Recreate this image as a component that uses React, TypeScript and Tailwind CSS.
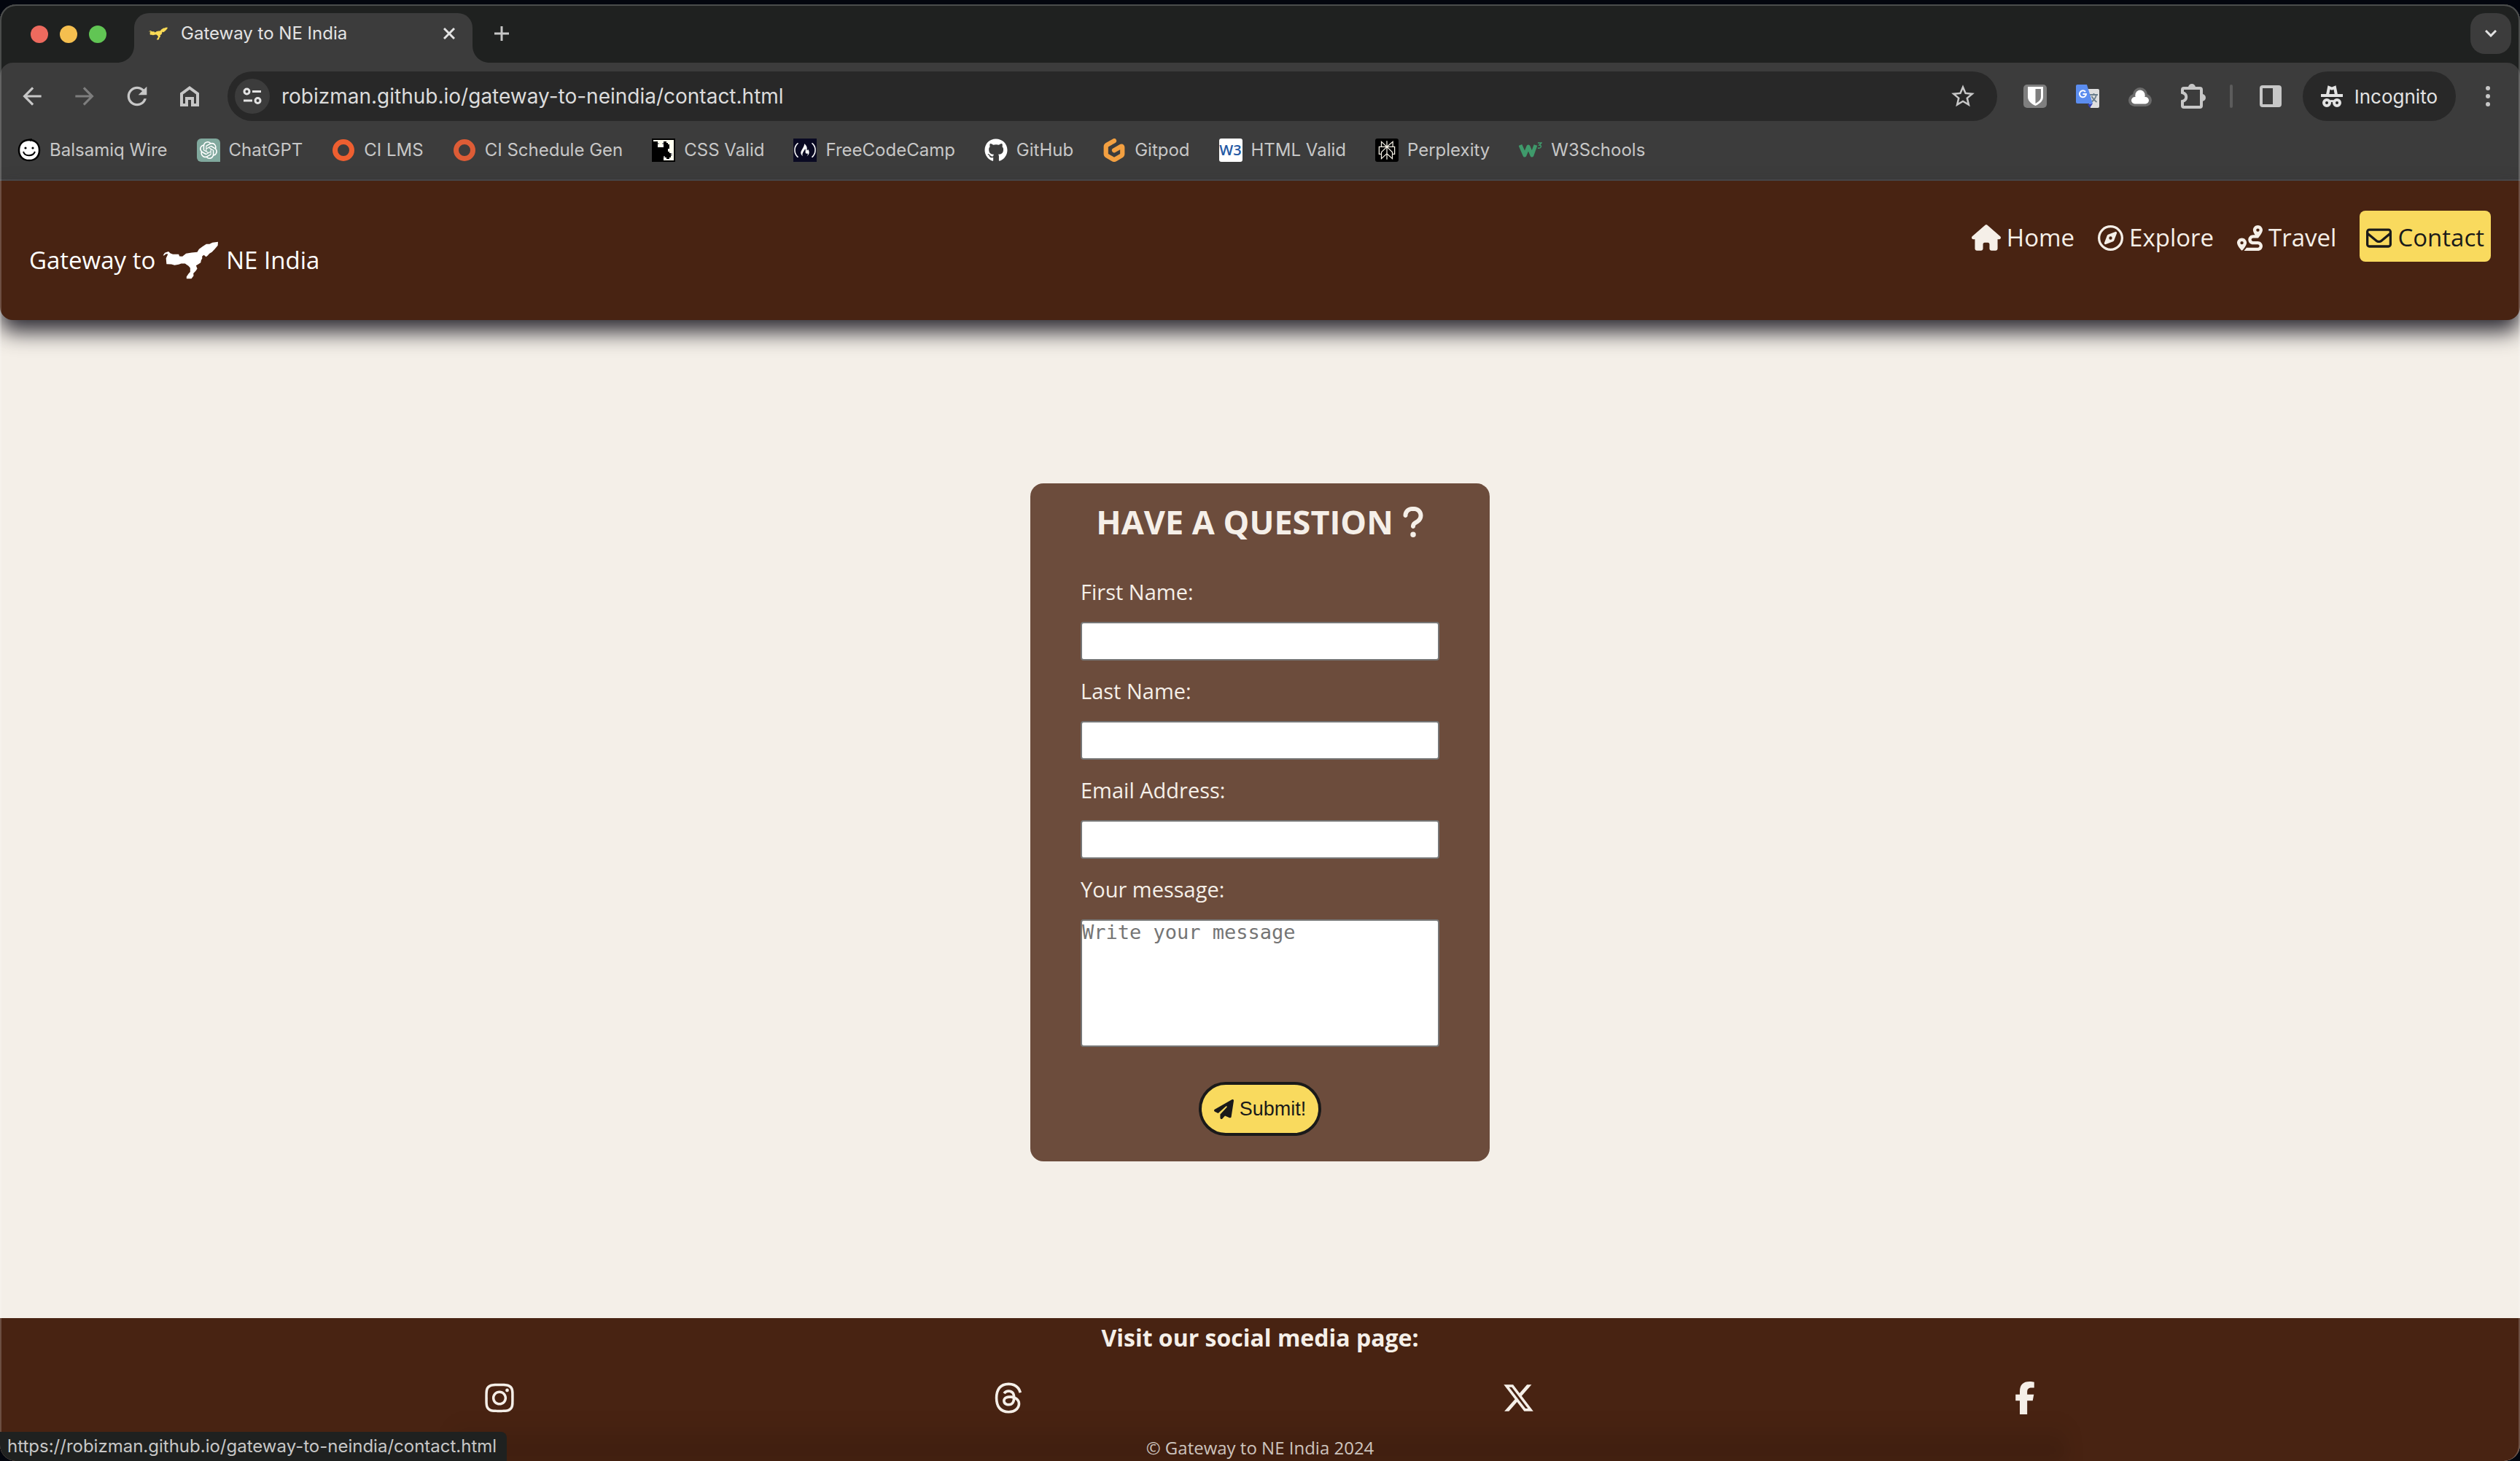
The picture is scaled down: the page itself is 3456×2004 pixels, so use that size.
import React from "react";
import {
  FaHouse,
  FaRegCompass,
  FaRoute,
  FaRegEnvelope,
  FaPaperPlane,
  FaQuestion,
  FaInstagram,
  FaThreads,
  FaXTwitter,
  FaFacebookF,
  FaFreeCodeCamp,
  FaGithub,
} from "react-icons/fa6";
import { MdArrowBack, MdArrowForward, MdRefresh, MdStarBorder } from "react-icons/md";
import { SiOpenai, SiGitpod, SiPerplexity } from "react-icons/si";

const MAP_PATH =
  "M678 338 685 328 700 323 708 330 718 334 742 334 745 342 757 343 772 331 795 327 818 325 825 313 838 303 855 292 868 292 880 286 903 283 902 298 890 312 878 325 868 331 860 340 854 344 845 337 838 342 838 352 834 358 832 368 822 375 813 380 818 393 812 402 802 412 803 422 794 434 774 434 774 426 782 414 789 406 789 390 782 382 768 372 752 372 742 376 725 379 712 375 692 374 690 350 698 333 690 332 682 339Z";

function RegionMap({ className }: { className: string }) {
  return (
    <svg viewBox="676 281 230 155" className={className} fill="currentColor" aria-hidden="true">
      <path d={MAP_PATH} />
    </svg>
  );
}

function TabStrip() {
  return (
    <div className="flex h-20 items-end bg-[#1f2120] pr-3 pl-[42px]">
      <div className="mb-[27px] flex gap-4">
        <button aria-label="Close window" className="size-6 rounded-full bg-[#ed6a5e]" />
        <button aria-label="Minimise window" className="size-6 rounded-full bg-[#f5bf4f]" />
        <button aria-label="Zoom window" className="size-6 rounded-full bg-[#61c554]" />
      </div>
      <div className="relative ml-[38px] flex h-[68px] w-[464px] items-center rounded-t-[20px] bg-[#3c3c3c] pr-6 pb-3 pl-5">
        <svg viewBox="0 0 24 24" className="absolute bottom-0 -left-6 size-6" fill="#3c3c3c" aria-hidden="true">
          <path d="M24 0v24H0C14 24 24 14 24 0Z" />
        </svg>
        <svg viewBox="0 0 24 24" className="absolute -right-6 bottom-0 size-6" fill="#3c3c3c" aria-hidden="true">
          <path d="M0 0v24h24C10 24 0 14 0 0Z" />
        </svg>
        <RegionMap className="h-[18px] w-[26px] text-[#f9da55]" />
        <span className="ml-[18px] flex-1 text-[24px] text-[#e3e3e3]">Gateway to NE India</span>
        <button aria-label="Close tab">
          <svg viewBox="0 0 16 16" className="size-4" stroke="#e3e3e3" strokeWidth="3" aria-hidden="true">
            <path d="M1 1l14 14M15 1L1 15" />
          </svg>
        </button>
      </div>
      <button aria-label="New tab" className="mb-[30px] ml-[30px]">
        <svg viewBox="0 0 20 20" className="size-5" stroke="#c7c7c7" strokeWidth="3" aria-hidden="true">
          <path d="M10 0v20M0 10h20" />
        </svg>
      </button>
      <button
        aria-label="Search tabs"
        className="mb-3 ml-auto flex size-14 items-center justify-center rounded-[20px] bg-[#3c3c3c]"
      >
        <svg viewBox="0 0 16 10" className="h-[10px] w-4" fill="none" stroke="#e3e3e3" strokeWidth="3" aria-hidden="true">
          <path d="M1 1l7 7 7-7" />
        </svg>
      </button>
    </div>
  );
}

function NavButton({ label, children }: { label: string; children: React.ReactNode }) {
  return (
    <button aria-label={label} className="flex size-10 items-center justify-center">
      {children}
    </button>
  );
}

function Toolbar() {
  return (
    <div className="flex items-center pt-3 pr-10 pl-6 text-[#c7c7c7]">
      <div className="mr-8 flex gap-8">
        <NavButton label="Back">
          <MdArrowBack className="size-[38px] shrink-0" />
        </NavButton>
        <NavButton label="Forward">
          <MdArrowForward className="size-[38px] shrink-0 text-[#7d7d7d]" />
        </NavButton>
        <NavButton label="Reload">
          <MdRefresh className="size-10 shrink-0" />
        </NavButton>
        <NavButton label="Home page">
          <svg viewBox="0 0 26 28" className="h-7 w-[26px]" fill="none" stroke="currentColor" strokeWidth="4" aria-hidden="true">
            <path d="M2 10.500 13 2.500l11 8V26h-7v-9H9v9H2Z" />
          </svg>
        </NavButton>
      </div>

      <div className="flex h-[68px] flex-1 items-center rounded-full bg-[#282828] pr-[28px] pl-[10px]">
        <button aria-label="Site information" className="flex size-12 items-center justify-center rounded-full bg-[#3c3c3c]">
          <svg viewBox="0 0 26 24" className="h-6 w-[26px]" fill="none" stroke="#e3e3e3" strokeWidth="3" aria-hidden="true">
            <circle cx="5.500" cy="5.500" r="3.500" />
            <path d="M13 5.500h12M1 18h12" />
            <circle cx="20.500" cy="18" r="3.500" />
          </svg>
        </button>
        <input
          aria-label="Address"
          readOnly
          value="robizman.github.io/gateway-to-neindia/contact.html"
          className="ml-4 min-w-0 flex-1 bg-transparent text-[28px] text-[#dcdcdc] outline-none"
        />
        <button aria-label="Bookmark this page">
          <MdStarBorder className="size-[38px]" />
        </button>
      </div>

      <div className="ml-9 flex items-center gap-10">
        <button aria-label="Password manager">
          <svg viewBox="0 0 32 32" className="size-8" aria-hidden="true">
            <rect width="32" height="32" rx="5" fill="#7f7f7f" />
            <path d="M6 3h21v14c0 6-6 10-10.500 12C12 27 6 23 6 17Z" fill="#fff" />
            <path d="M16.500 6H24v11c0 4-4 7-7.500 9Z" fill="#7f7f7f" />
          </svg>
        </button>
        <button aria-label="Translate">
          <svg viewBox="0 0 32 32" className="size-8" aria-hidden="true">
            <path d="M12 6h18a2 2 0 0 1 2 2v22a2 2 0 0 1-2 2H20Z" fill="#dfdfdf" />
            <path d="M19 14h11M24.500 12v2M28 14c-1 5-4 8-7 10M21.500 16c2 4 4 6 7 8" stroke="#6b7f8c" strokeWidth="1.800" fill="none" />
            <path d="m16 27 7-1-4 6Z" fill="#3341b5" />
            <path d="M2 0h13l8 26H2a2 2 0 0 1-2-2V2a2 2 0 0 1 2-2Z" fill="#5b8def" />
            <path d="M13 10a4.500 4.500 0 1 0 1 3H9.500" stroke="#fff" strokeWidth="2" fill="none" />
          </svg>
        </button>
        <button aria-label="Cloud extension">
          <svg viewBox="0 0 32 32" className="size-8" aria-hidden="true">
            <g fill="#6b6b6b">
              <circle cx="16" cy="14" r="10" />
              <rect y="13" width="32" height="17" rx="8.500" />
            </g>
            <g fill="#fff">
              <circle cx="16" cy="14" r="6.500" />
              <path d="M9.500 14h13v8h-13Z" />
              <rect x="4" y="17" width="24" height="9.500" rx="4.700" />
            </g>
          </svg>
        </button>
        <button aria-label="Extensions">
          <svg viewBox="0 0 34 34" className="size-[34px]" fill="none" stroke="currentColor" strokeWidth="4" aria-hidden="true">
            <path d="M4 6h22a2 2 0 0 1 2 2v22a2 2 0 0 1-2 2H4a2 2 0 0 1-2-2v-6c7-2 7-10 0-12V8a2 2 0 0 1 2-2Z" />
            <path d="M10 5a5 5 0 0 1 10 0ZM29 14a5 5 0 0 1 0 10Z" fill="currentColor" stroke="none" />
          </svg>
        </button>
      </div>

      <div className="ml-[33px] h-8 w-1 rounded-full bg-[#5c5c5c]" />
      <button aria-label="Side panel" className="ml-[37px]">
        <svg viewBox="0 0 30 30" className="size-[30px]" fill="none" stroke="currentColor" strokeWidth="4" aria-hidden="true">
          <rect x="2" y="2" width="26" height="26" rx="2" />
          <path d="M18 2h10v26H18Z" fill="currentColor" stroke="none" />
        </svg>
      </button>
      <button className="ml-[29px] flex h-[68px] items-center gap-4 rounded-full bg-[#282828] px-[25px] text-[26px] text-[#e3e3e3]">
        <svg viewBox="0 0 30 30" className="size-[30px]" fill="none" stroke="currentColor" strokeWidth="3" aria-hidden="true">
          <path d="M9 13 11 3l4 1.500L19 3l2 10" strokeWidth="4" />
          <path d="M0 14h30" strokeWidth="4" />
          <circle cx="8" cy="24" r="4" strokeWidth="4" />
          <circle cx="22" cy="24" r="4" strokeWidth="4" />
          <path d="M11 23c2-2 6-2 8 0" />
        </svg>
        Incognito
      </button>
      <button aria-label="Menu" className="ml-10">
        <svg viewBox="0 0 8 28" className="h-7 w-2" fill="currentColor" aria-hidden="true">
          <circle cx="4" cy="3" r="3" />
          <circle cx="4" cy="14" r="3" />
          <circle cx="4" cy="25" r="3" />
        </svg>
      </button>
    </div>
  );
}

function Ring({ color }: { color: string }) {
  return (
    <svg viewBox="0 0 32 32" className="size-8" fill="none" stroke={color} strokeWidth="7" aria-hidden="true">
      <circle cx="16" cy="16" r="11.500" />
    </svg>
  );
}

const bookmarks: { label: string; icon: React.ReactNode }[] = [
  {
    label: "Balsamiq Wire",
    icon: (
      <svg viewBox="0 0 32 32" className="size-8" aria-hidden="true">
        <path d="M16 2C25 2 30 8 30 16s-5 14-14 14S2 24 2 16 7 2 16 2Z" fill="#fff" stroke="#000" strokeWidth="2.500" />
        <path d="M14 1l6-1-2 4Z" />
        <circle cx="11" cy="13" r="1.600" />
        <circle cx="21" cy="13" r="1.600" />
        <path d="M8 18c2 7 13 7 16 0" fill="none" stroke="#000" strokeWidth="2" />
      </svg>
    ),
  },
  {
    label: "ChatGPT",
    icon: (
      <span className="flex size-8 items-center justify-center rounded-md rounded-br-none bg-[#80a89d] text-white">
        <SiOpenai className="size-6" />
      </span>
    ),
  },
  { label: "CI LMS", icon: <Ring color="#ee5f30" /> },
  { label: "CI Schedule Gen", icon: <Ring color="#dd5c36" /> },
  {
    label: "CSS Valid",
    icon: (
      <svg viewBox="0 0 16 16" className="size-8" shapeRendering="crispEdges" aria-hidden="true">
        <rect width="16" height="16" fill="#000" />
        <path d="M1 1h14v14H8v-2h2v1h2v-1h1v-3h-1V9h-1V7h1V4h-1V3h-1V2H8v1H7v1h1v2H4V4h1V3H4V2H1Z" fill="#fffff0" />
        <path d="M4 3h1v1H4ZM7 3h1v1H7ZM8 12h1v1H8ZM13 10h1v2h-1Z" fill="#9a9aa0" />
      </svg>
    ),
  },
  {
    label: "FreeCodeCamp",
    icon: (
      <span className="flex size-8 items-center justify-center bg-[#0a0a23] text-white">
        <FaFreeCodeCamp className="size-[30px]" />
      </span>
    ),
  },
  { label: "GitHub", icon: <FaGithub className="size-8 text-white" /> },
  { label: "Gitpod", icon: <SiGitpod className="size-8 text-[#f3a041]" /> },
  {
    label: "HTML Valid",
    icon: (
      <span className="flex size-8 items-center justify-center rounded-[3px] bg-white font-['Open_Sans'] text-[20px] font-semibold text-[#2459a4]">
        W3
      </span>
    ),
  },
  {
    label: "Perplexity",
    icon: (
      <span className="flex size-8 items-center justify-center rounded-[3px] bg-black text-[#f3efe4]">
        <SiPerplexity className="size-[26px]" />
      </span>
    ),
  },
  {
    label: "W3Schools",
    icon: (
      <svg viewBox="0 0 32 32" className="size-8" fill="none" stroke="#3f9a6b" aria-hidden="true">
        <path d="M2 9l6 14 5-12 5 12 5-14" strokeWidth="5" strokeLinejoin="round" />
        <path d="M26 6h5l-3 3c4 0 3 5-2 4" strokeWidth="1.500" />
      </svg>
    ),
  },
];

function BookmarksBar() {
  return (
    <nav aria-label="Bookmarks" className="flex h-[82px] items-center gap-10 border-b-2 border-[#4a4a4c] pl-6">
      {bookmarks.map(({ label, icon }) => (
        <a key={label} href="#" className="flex items-center gap-3 text-[24px] whitespace-nowrap text-[#c7c7c7]">
          {icon}
          {label}
        </a>
      ))}
    </nav>
  );
}

function SiteHeader() {
  const link = "flex h-[70px] items-center gap-2 pt-1";
  return (
    <header className="relative flex items-start justify-between rounded-b-[18px] bg-[#482312] px-10 pt-[41px] pb-14 font-['Open_Sans'] text-[#f5efe8] shadow-[0_16px_30px_#2d2b33]">
      <a href="#" className="mt-[42px] flex items-center gap-[10px] text-[33px] leading-[48px] text-white">
        Gateway to
        <RegionMap className="h-[52px] w-[77px]" />
        NE India
      </a>
      <nav aria-label="Site" className="flex gap-8 text-[33px]">
        <a href="#" className={link}>
          <FaHouse className="h-9 w-10" />
          Home
        </a>
        <a href="#" className={link}>
          <FaRegCompass className="size-[35px]" />
          Explore
        </a>
        <a href="#" className={link}>
          <FaRoute className="size-[35px]" />
          Travel
        </a>
        <a
          href="#"
          aria-current="page"
          className="flex h-[70px] items-center gap-2 rounded-lg bg-[#f9da5e] px-[9px] pt-1 text-[#1a1a1a]"
        >
          <FaRegEnvelope className="size-[35px]" />
          Contact
        </a>
      </nav>
    </header>
  );
}

function TextField({ id, label, type }: { id: string; label: string; type: string }) {
  return (
    <div className="mb-[22px] flex flex-col gap-[21px]">
      <label htmlFor={id} className="leading-10">
        {label}
      </label>
      <input id={id} type={type} className="h-[53px] rounded-[4px] border-2 border-[#767676] bg-white text-black" />
    </div>
  );
}

function ContactForm() {
  return (
    <form
      onSubmit={(event) => event.preventDefault()}
      className="flex w-full max-w-[630px] flex-col rounded-[18px] bg-[#6c4c3c] px-[69px] pt-[23px] pb-[35px] font-['Open_Sans'] text-[29px] text-[#f5efe8]"
    >
      <h1 className="mb-[46px] flex items-center justify-center gap-3 text-[45px] leading-[60px] font-bold whitespace-nowrap">
        HAVE A QUESTION
        <FaQuestion className="h-12 w-[30px]" />
      </h1>
      <TextField id="first-name" label="First Name:" type="text" />
      <TextField id="last-name" label="Last Name:" type="text" />
      <TextField id="email" label="Email Address:" type="email" />
      <div className="flex flex-col gap-[21px]">
        <label htmlFor="message" className="leading-10">
          Your message:
        </label>
        <textarea
          id="message"
          placeholder="Write your message"
          className="h-[175px] resize-none rounded-[4px] border-2 border-[#767676] bg-white font-['DejaVu_Sans_Mono'] text-[27px] leading-8 text-black placeholder:text-[#757575]"
        />
      </div>
      <button
        type="submit"
        className="mt-12 flex h-[74px] items-center gap-2 self-center rounded-full border-4 border-[#1a1a1a] bg-[#f9da5e] px-[17px] font-['Liberation_Sans'] text-[27px] text-[#1a1a1a]"
      >
        <FaPaperPlane className="size-[27px]" />
        Submit!
      </button>
    </form>
  );
}

function SiteFooter() {
  return (
    <footer className="bg-[#482312] pt-[3px] text-center font-['Open_Sans'] text-[#f5efe8]">
      <h2 className="text-[32px] leading-[48px] font-bold">Visit our social media page:</h2>
      <div className="mt-9 flex items-center justify-evenly px-2">
        <a href="#" aria-label="Instagram">
          <FaInstagram className="h-[45px] w-10" />
        </a>
        <a href="#" aria-label="Threads">
          <FaThreads className="h-[45px] w-10" />
        </a>
        <a href="#" aria-label="X">
          <FaXTwitter className="size-[45px]" />
        </a>
        <a href="#" aria-label="Facebook">
          <FaFacebookF className="h-[45px] w-7" />
        </a>
      </div>
      <p className="mt-7 text-[24px] leading-9 text-[#e0d8d0]">© Gateway to NE India 2024</p>
    </footer>
  );
}

export default function App() {
  return (
    <div className="flex min-h-screen flex-col bg-[#03060e] pt-[6px] font-['Inter']">
      <div className="relative flex flex-1 flex-col overflow-hidden rounded-[22px] bg-[#f4efe8]">
        <div className="bg-[#1f2120]">
          <TabStrip />
          <div className="rounded-t-[18px] bg-[#3c3c3c]">
            <Toolbar />
            <BookmarksBar />
          </div>
        </div>
        <SiteHeader />
        <main className="flex flex-1 items-center justify-center pt-[9px]">
          <ContactForm />
        </main>
        <SiteFooter />
        <div className="pointer-events-none absolute inset-x-[18%] bottom-0 h-14 bg-linear-to-t from-black/15 to-transparent blur-md" />
        <div className="pointer-events-none absolute inset-0 rounded-[22px] border-2 border-b-0 border-white/20" />
        <div className="absolute bottom-0 left-0 flex h-10 items-center rounded-tr-lg bg-[#1f2120] pr-[14px] pl-[10px] text-[24px] text-[#c7c7c7]">
          https://robizman.github.io/gateway-to-neindia/contact.html
        </div>
      </div>
    </div>
  );
}
